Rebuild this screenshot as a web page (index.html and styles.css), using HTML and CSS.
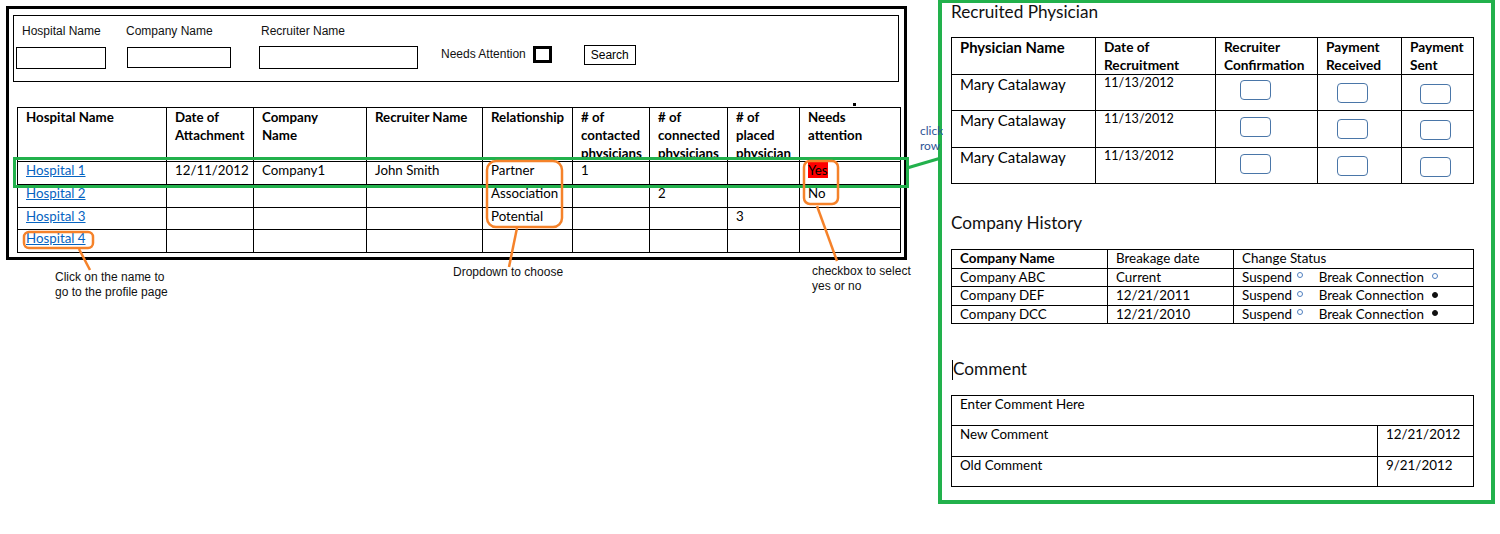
FILE: index.html
```html
<!DOCTYPE html>
<html lang="en">
<head>
<meta charset="utf-8">
<title>Hospital search</title>
<link rel="stylesheet" href="styles.css">
</head>
<body>
<div class="page">
  <div class="left">
    <div class="frame">
      <div class="search">
        <div class="field f1"><label>Hospital Name</label><input type="text"></div>
        <div class="field f2"><label>Company Name</label><input type="text"></div>
        <div class="field f3"><label>Recruiter Name</label><input type="text"></div>
        <div class="attn">Needs Attention<span class="check"></span></div>
        <button class="btn" type="button">Search</button>
      </div>
      <table class="grid">
        <colgroup>
          <col style="width:149px"><col style="width:87px"><col style="width:113px"><col style="width:116px"><col style="width:90px"><col style="width:77px"><col style="width:78px"><col style="width:72px"><col style="width:101px">
        </colgroup>
        <thead>
          <tr>
            <th><div class="hd">Hospital Name</div></th>
            <th><div class="hd">Date of<br>Attachment</div></th>
            <th><div class="hd">Company<br>Name</div></th>
            <th><div class="hd">Recruiter Name</div></th>
            <th><div class="hd">Relationship</div></th>
            <th><div class="hd"># of<br>contacted<br>physicians</div></th>
            <th><div class="hd"># of<br>connected<br>physicians</div></th>
            <th><div class="hd"># of<br>placed<br>physician</div></th>
            <th><div class="hd">Needs<br>attention</div></th>
          </tr>
        </thead>
        <tbody>
          <tr>
            <td><div class="cd"><a href="#">Hospital 1</a></div></td>
            <td><div class="cd">12/11/2012</div></td>
            <td><div class="cd">Company1</div></td>
            <td><div class="cd">John Smith</div></td>
            <td><div class="cd">Partner</div></td>
            <td><div class="cd">1</div></td>
            <td><div class="cd"></div></td>
            <td><div class="cd"></div></td>
            <td><div class="cd"><span class="yes">Yes</span></div></td>
          </tr>
          <tr>
            <td><div class="cd"><a href="#">Hospital 2</a></div></td>
            <td><div class="cd"></div></td>
            <td><div class="cd"></div></td>
            <td><div class="cd"></div></td>
            <td><div class="cd">Association</div></td>
            <td><div class="cd"></div></td>
            <td><div class="cd">2</div></td>
            <td><div class="cd"></div></td>
            <td><div class="cd">No</div></td>
          </tr>
          <tr>
            <td><div class="cd short"><a href="#">Hospital 3</a></div></td>
            <td><div class="cd short"></div></td>
            <td><div class="cd short"></div></td>
            <td><div class="cd short"></div></td>
            <td><div class="cd short">Potential</div></td>
            <td><div class="cd short"></div></td>
            <td><div class="cd short"></div></td>
            <td><div class="cd short">3</div></td>
            <td><div class="cd short"></div></td>
          </tr>
          <tr>
            <td><div class="cd"><a href="#">Hospital 4</a></div></td>
            <td><div class="cd"></div></td>
            <td><div class="cd"></div></td>
            <td><div class="cd"></div></td>
            <td><div class="cd"></div></td>
            <td><div class="cd"></div></td>
            <td><div class="cd"></div></td>
            <td><div class="cd"></div></td>
            <td><div class="cd"></div></td>
          </tr>
        </tbody>
      </table>
    </div>
    <div class="notes">
      <p class="n1">Click on the name to<br>go to the profile page</p>
      <p class="n2">Dropdown to choose</p>
      <p class="n3">checkbox to select<br>yes or no</p>
    </div>
    <svg class="overlay" width="945" height="300" viewBox="0 0 945 300">
      <rect x="14.5" y="158.5" width="893" height="28" fill="none" stroke="#22b14c" stroke-width="3"/>
      <line x1="907" y1="168" x2="941" y2="158" stroke="#22b14c" stroke-width="3"/>
      <rect x="24" y="232" width="69" height="16" rx="5" fill="none" stroke="#f5822a" stroke-width="2.5"/>
      <line x1="79" y1="249" x2="90" y2="270" stroke="#f5822a" stroke-width="2.5"/>
      <rect x="487" y="161" width="75" height="66" rx="9" fill="none" stroke="#f5822a" stroke-width="2.5"/>
      <line x1="517" y1="228" x2="509" y2="267" stroke="#f5822a" stroke-width="2.5"/>
      <rect x="804" y="161" width="34" height="43" rx="6" fill="none" stroke="#f5822a" stroke-width="2.5"/>
      <line x1="817" y1="206" x2="837" y2="261" stroke="#f5822a" stroke-width="2.5"/>
      <rect x="853" y="103" width="3" height="3" fill="#000"/>
    </svg>
    <div class="click-note">click<br>row</div>
  </div>

  <div class="panel">
    <h2 class="ttl">Recruited Physician</h2>
    <table class="phys">
      <colgroup><col style="width:144px"><col style="width:120px"><col style="width:102px"><col style="width:84px"><col style="width:72px"></colgroup>
      <thead>
        <tr>
          <th><div class="ph big">Physician Name</div></th>
          <th><div class="ph">Date of<br>Recruitment</div></th>
          <th><div class="ph">Recruiter<br>Confirmation</div></th>
          <th><div class="ph">Payment<br>Received</div></th>
          <th><div class="ph">Payment<br>Sent</div></th>
        </tr>
      </thead>
      <tbody>
        <tr class="pr a">
          <td><div class="pc name">Mary Catalaway</div></td>
          <td><div class="pc date">11/13/2012</div></td>
          <td class="bx"><div class="pc"><span class="cb c3 first"></span></div></td>
          <td class="bx"><div class="pc"><span class="cb c4"></span></div></td>
          <td class="bx"><div class="pc"><span class="cb c5"></span></div></td>
        </tr>
        <tr class="pr b">
          <td><div class="pc name">Mary Catalaway</div></td>
          <td><div class="pc date">11/13/2012</div></td>
          <td class="bx"><div class="pc"><span class="cb c3"></span></div></td>
          <td class="bx"><div class="pc"><span class="cb c4"></span></div></td>
          <td class="bx"><div class="pc"><span class="cb c5"></span></div></td>
        </tr>
        <tr class="pr a">
          <td><div class="pc name">Mary Catalaway</div></td>
          <td><div class="pc date">11/13/2012</div></td>
          <td class="bx"><div class="pc"><span class="cb c3"></span></div></td>
          <td class="bx"><div class="pc"><span class="cb c4"></span></div></td>
          <td class="bx"><div class="pc"><span class="cb c5"></span></div></td>
        </tr>
      </tbody>
    </table>

    <h2 class="ttl ttl-hist">Company History</h2>
    <table class="hist">
      <colgroup><col style="width:156px"><col style="width:126px"><col style="width:240px"></colgroup>
      <tbody>
        <tr><td><div class="hc"><b>Company Name</b></div></td><td><div class="hc">Breakage date</div></td><td><div class="hc">Change Status</div></td></tr>
        <tr><td><div class="hc">Company ABC</div></td><td><div class="hc">Current</div></td><td><div class="hc"><span class="opt">Suspend<i class="dot"></i></span>Break Connection<i class="dot d2"></i></div></td></tr>
        <tr><td><div class="hc">Company DEF</div></td><td><div class="hc">12/21/2011</div></td><td><div class="hc"><span class="opt">Suspend<i class="dot"></i></span>Break Connection<i class="dot d2 on"></i></div></td></tr>
        <tr><td><div class="hc">Company DCC</div></td><td><div class="hc">12/21/2010</div></td><td><div class="hc"><span class="opt">Suspend<i class="dot"></i></span>Break Connection<i class="dot d2 on"></i></div></td></tr>
      </tbody>
    </table>

    <h2 class="ttl ttl-cmt"><span class="caret"></span>Comment</h2>
    <table class="cmt">
      <colgroup><col style="width:426px"><col style="width:96px"></colgroup>
      <tbody>
        <tr><td colspan="2"><div class="cc h29">Enter Comment Here</div></td></tr>
        <tr><td><div class="cc h30">New Comment</div></td><td><div class="cc h30">12/21/2012</div></td></tr>
        <tr><td><div class="cc h29">Old Comment</div></td><td><div class="cc h29">9/21/2012</div></td></tr>
      </tbody>
    </table>
  </div>
</div>
</body>
</html>
```

FILE: styles.css
```css
* { box-sizing: border-box; }
html, body { margin: 0; padding: 0; background: #fff; }
body {
  width: 1500px;
  height: 534px;
  overflow: hidden;
  font-family: "Lato", "Liberation Sans", sans-serif;
  color: #000;
}
.page { display: flex; align-items: flex-start; }
.left { position: relative; width: 938px; flex: none; }

/* outer wireframe */
.frame {
  margin: 6px 0 0 6px;
  width: 901px;
  height: 254px;
  border: 3px solid #000;
  padding: 6px 0 0 4px;
}

/* search bar */
.search {
  width: 886px;
  height: 67px;
  border: 1px solid #000;
  display: flex;
  align-items: flex-start;
  padding: 8px 0 0 2px;
  font-family: "Liberation Sans", Arial, sans-serif;
  font-size: 12px;
  line-height: 14px;
  color: #111;
}
.field { display: flex; flex-direction: column; align-items: flex-start; }
.field label { display: block; height: 14px; white-space: nowrap; }
.field input {
  display: block;
  margin: 9px 0 0 0;
  border: 1px solid #000;
  padding: 0;
  background: #fff;
  font: inherit;
  outline: none;
}
.f1 label { padding-left: 6px; }
.f1 input { width: 90px; height: 22px; }
.f2 { margin-left: 21px; }
.f2 label { margin-left: -1px; }
.f2 input { width: 104px; height: 21px; }
.f3 { margin-left: 28px; }
.f3 label { padding-left: 2px; }
.f3 input { width: 159px; height: 23px; margin-top: 8px; }
.attn {
  margin: 20px 0 0 23px;
  height: 20px;
  display: flex;
  align-items: center;
  white-space: nowrap;
}
.check {
  display: block;
  width: 19px;
  height: 17px;
  border: 3px solid #000;
  margin-left: 7px;
}
.btn {
  margin: 21px 0 0 32px;
  width: 52px;
  height: 20px;
  border: 1px solid #000;
  background: #fff;
  padding: 0;
  font: inherit;
  color: #000;
}

/* main grid */
.grid {
  margin: 25px 0 0 4px;
  width: 884px;
  border-collapse: collapse;
  table-layout: fixed;
  font-size: 13.3px;
}
.grid th, .grid td {
  border: 1px solid #000;
  padding: 0;
  vertical-align: top;
  text-align: left;
}
.grid .hd {
  height: 53px;
  overflow: hidden;
  padding-left: 8px;
  line-height: 18px;
  font-weight: 700;
  white-space: nowrap;
}
.grid .cd {
  height: 22px;
  padding-left: 8px;
  line-height: 16px;
  white-space: nowrap;
}
.grid .cd.short { height: 21px; }
.grid a { color: #0563c1; text-decoration: underline; }
.yes { background: #ff0000; }

/* annotations */
.notes {
  display: flex;
  align-items: flex-start;
  font-family: "Liberation Sans", Arial, sans-serif;
  font-size: 12px;
  line-height: 15px;
  color: #111;
}
.notes p { margin: 0; flex: none; }
.notes .n1 { margin: 10px 0 0 55px; width: 398px; }
.notes .n2 { margin-top: 5px; width: 359px; }
.notes .n3 { margin-top: 4px; }

.overlay {
  position: absolute;
  left: 0;
  top: 0;
  z-index: 3;
  pointer-events: none;
  overflow: visible;
}
.click-note {
  position: absolute;
  left: 920px;
  top: 123px;
  width: 23px;
  overflow: hidden;
  white-space: nowrap;
  font-size: 12px;
  line-height: 15px;
  color: #2f5597;
  z-index: 4;
}

/* right panel */
.panel {
  flex: none;
  width: 557px;
  height: 505px;
  margin-top: -1px;
  border: 4px solid #22b14c;
  padding-left: 9px;
  background: #fff;
  position: relative;
  z-index: 1;
  font-size: 13.4px;
}
.ttl {
  margin: 0;
  font-size: 17.2px;
  line-height: 18px;
  font-weight: 400;
  color: #111;
}
.ttl-hist { margin-top: 29.5px; }
.ttl-cmt { margin-top: 36.4px; padding-left: 1px; }
.caret {
  display: inline-block;
  width: 1px;
  height: 20px;
  background: #000;
  vertical-align: -5px;
}

.phys, .hist, .cmt {
  width: 523px;
  border-collapse: collapse;
  table-layout: fixed;
}
.phys th, .phys td, .hist td, .cmt td {
  border: 1px solid #000;
  padding: 0;
  vertical-align: top;
  text-align: left;
}
.phys { margin-top: 16px; }
.ph {
  height: 36px;
  padding-left: 8px;
  font-size: 13.7px;
  line-height: 17.5px;
  font-weight: 700;
  white-space: nowrap;
}
.ph.big { font-size: 14.8px; padding-top: 1px; }
.pc { padding-left: 8px; line-height: 17.5px; white-space: nowrap; display: flow-root; }
.pr.a .pc { height: 35px; }
.pr.b .pc { height: 36px; }
.pc.name { font-size: 15px; padding-top: 1px; }
.pc.date { font-size: 12.6px; padding-top: 0; position: relative; top: -1px; }
.bx .pc { padding-left: 0; }
.cb {
  display: block;
  width: 31px;
  height: 20px;
  border: 1.3px solid #4a76a8;
  border-radius: 4px;
  background: #fff;
}
.cb.c3 { margin: 6px 0 0 24px; }
.cb.c3.first { margin-top: 5px; }
.cb.c4 { margin: 8px 0 0 19px; }
.cb.c5 { margin: 9px 0 0 18px; }

.hist { margin-top: 17.6px; }
.hc {
  height: 17.5px;
  padding-left: 8px;
  line-height: 17.5px;
  white-space: nowrap;
}
.opt { display: inline-block; width: 76.7px; }
.dot {
  display: inline-block;
  width: 6px;
  height: 6px;
  border: 1px solid #4f7fc0;
  border-radius: 50%;
  margin-left: 5.2px;
  vertical-align: 3.5px;
}
.dot.d2 { margin-left: 8px; vertical-align: 2.5px; }
.dot.on { background: #111; border-color: #111; }

.cmt { margin-top: 15px; }
.cc { padding-left: 8px; line-height: 17.5px; white-space: nowrap; }
.cc.h29 { height: 29px; }
.cc.h30 { height: 30px; }
```
